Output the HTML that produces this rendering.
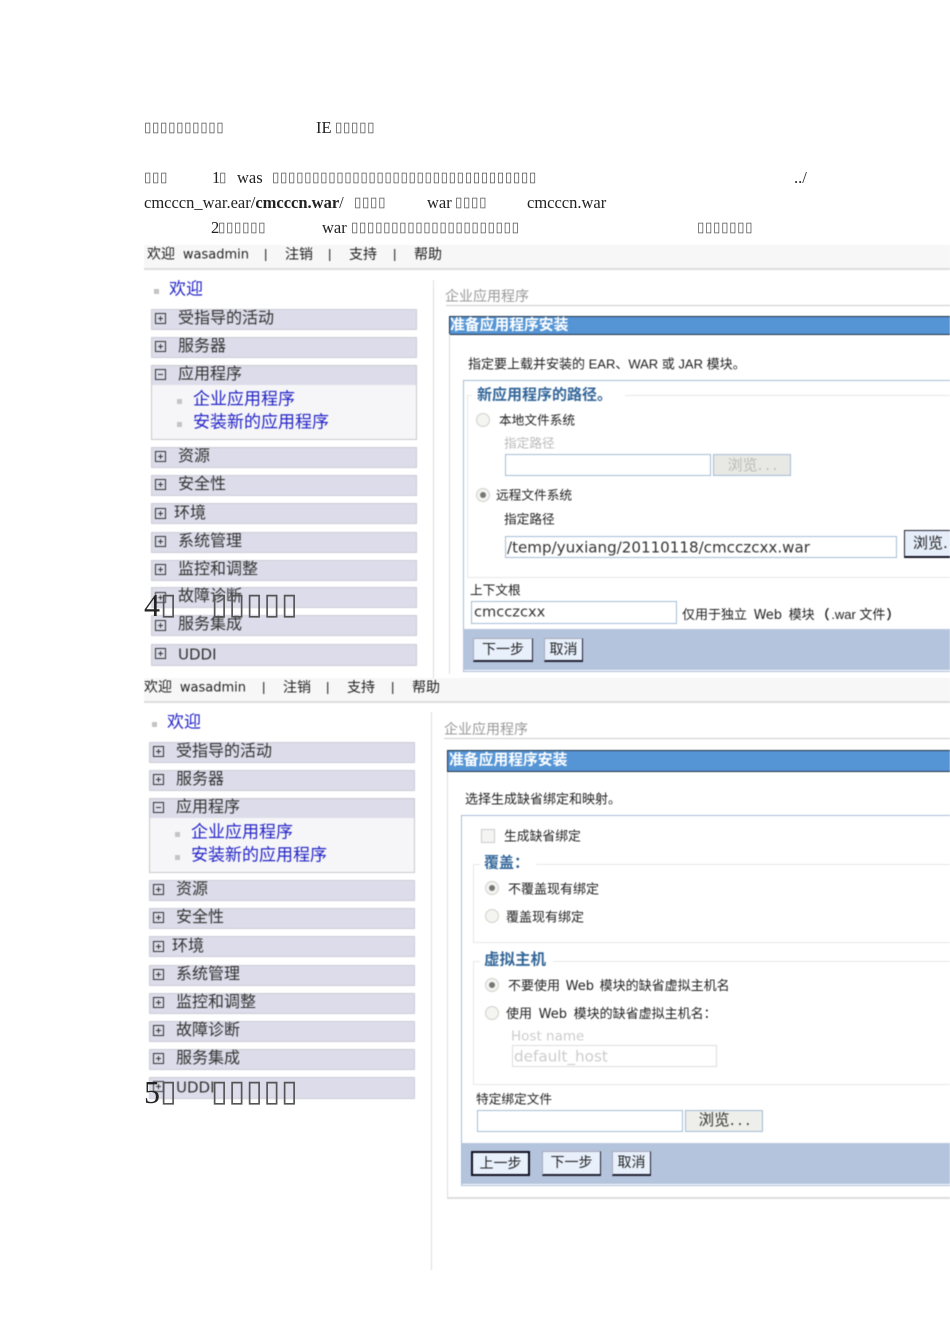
<!DOCTYPE html>
<html><head><meta charset="utf-8"><style>
html,body{margin:0;padding:0;background:#fff}
body{width:950px;height:1344px;position:relative;overflow:hidden;font-family:"Liberation Sans","WenQuanYi Zen Hei","Noto Sans CJK SC",sans-serif}
.a,.t,.b{position:absolute;white-space:nowrap}
.t{line-height:1;transform:translateY(calc(-50% + 1px));color:#222}
.s{font-family:"Liberation Serif","Noto Serif CJK SC",serif;font-size:16.5px;color:#222}
.b{font-family:"DejaVu Sans",sans-serif;line-height:1;transform:translateY(-50%);color:#555;font-size:13.5px;letter-spacing:.6px}
.big{font-size:30px;letter-spacing:1px}
.shot{position:absolute;left:0;top:0;width:950px;height:1344px;filter:blur(.45px);overflow:hidden}
.bar{position:absolute;left:146px;width:804px;height:23px;background:#f7f7f7;border-bottom:2px solid #ddd}
.row{position:absolute;left:151px;width:264px;height:19px;background:#dcdcea;border:1px solid #cdcdd8}
.exp{position:absolute;left:151px;top:365px;width:264px;height:73px;background:#f6f6f8;border:1px solid #c8c8d0}
.exp i{position:absolute;left:0;top:0;width:264px;height:19px;background:#dcdcea;display:block}
.pm{position:absolute;left:155px;width:9px;height:9px;border:1px solid #333;background:transparent}
.pm:before{content:"";position:absolute;left:2px;top:4px;width:5px;height:1px;background:#333}
.pm.p:after{content:"";position:absolute;left:4px;top:2px;width:1px;height:5px;background:#333}
.n{font-size:16px;color:#333}
.l{color:#2424c8}
.bl{position:absolute;width:5px;height:5px;background:#c4c4c4}
.r{position:absolute;width:12px;height:12px;border-radius:50%;border:1px solid #d0d0cc;background:#f4f4f0}
.r.on:after{content:"";position:absolute;left:3px;top:3px;width:6px;height:6px;border-radius:50%;background:#777}
.i{position:absolute;box-sizing:border-box;background:#fff;border:1px solid #a4bcd6}
.btn{position:absolute;box-sizing:border-box;background:#e8f0fc;border:1px solid #aab;border-right:1px solid #223;border-bottom:2px solid #223;text-align:center;font-size:14px;color:#222;line-height:21px;white-space:nowrap;overflow:hidden}
.w{font-family:"DejaVu Sans",sans-serif}
.h{background:#ddd;position:absolute}
.g{color:#999}
.m{font-size:13px;color:#222}
.le{font-size:15px;font-weight:bold;color:#336699}
.f{font-size:13px}
.ti{font-size:14.8px;font-weight:bold;color:#fff}
</style></head><body>

<div class="shot">
<!-- first nav -->
<div class="a" style="left:0;top:0;width:950px;height:680px">
<div class="bar" style="top:245px;left:144px;width:806px"></div>
<div class="t m" style="left:147px;top:253px;font-size:14px">欢迎 <span class="w" style="font-size:13px;margin-left:4px">wasadmin</span></div>
<div class="t m" style="left:264px;top:253px">|</div><div class="t m l" style="left:285px;top:253px;font-size:14px">注销</div>
<div class="t m" style="left:328px;top:253px">|</div><div class="t m l" style="left:349px;top:253px;font-size:14px">支持</div>
<div class="t m" style="left:393px;top:253px">|</div><div class="t m l" style="left:414px;top:253px;font-size:14px">帮助</div>

<div class="bl" style="left:154px;top:289px"></div><div class="t l" style="left:169px;top:288px;font-size:17px">欢迎</div>
<div class="row" style="top:309px"></div><div class="pm p" style="top:313px"></div><div class="t n" style="left:178px;top:318px">受指导的活动</div>
<div class="row" style="top:337px"></div><div class="pm p" style="top:341px"></div><div class="t n" style="left:178px;top:346px">服务器</div>
<div class="exp"><i></i></div><div class="pm" style="top:369px"></div><div class="t n" style="left:178px;top:374px">应用程序</div>
<div class="bl" style="left:177px;top:399px"></div><div class="t l" style="left:193px;top:398px;font-size:17px">企业应用程序</div>
<div class="bl" style="left:177px;top:422px"></div><div class="t l" style="left:193px;top:421px;font-size:17px">安装新的应用程序</div>
<div class="row" style="top:447px"></div><div class="pm p" style="top:451px"></div><div class="t n" style="left:178px;top:456px">资源</div>
<div class="row" style="top:475px"></div><div class="pm p" style="top:479px"></div><div class="t n" style="left:178px;top:484px">安全性</div>
<div class="row" style="top:503px"></div><div class="pm p" style="top:508px"></div><div class="t n" style="left:174px;top:513px">环境</div>
<div class="row" style="top:532px"></div><div class="pm p" style="top:536px"></div><div class="t n" style="left:178px;top:541px">系统管理</div>
<div class="row" style="top:560px"></div><div class="pm p" style="top:564px"></div><div class="t n" style="left:178px;top:569px">监控和调整</div>
<div class="row" style="top:587px"></div><div class="pm p" style="top:592px"></div><div class="t n" style="left:178px;top:596px">故障诊断</div>
<div class="row" style="top:615px"></div><div class="pm p" style="top:620px"></div><div class="t n" style="left:178px;top:624px">服务集成</div>
<div class="row" style="top:644px;height:20px"></div><div class="pm p" style="top:648px"></div><div class="t n w" style="left:178px;top:654px;font-size:15px">UDDI</div>
</div>

<div class="h" style="left:433px;top:280px;width:1px;height:398px"></div>
<div class="t g" style="left:445px;top:295px;font-size:14px">企业应用程序</div>
<div class="h" style="left:446px;top:305px;width:504px;height:1px;background:#ccc"></div>
<div class="a" style="left:449px;top:316px;width:501px;height:17px;background:#5595d5;border:1px solid #234;border-right:0"></div>
<div class="t ti" style="left:450px;top:325px">准备应用程序安装</div>
<div class="h" style="left:449px;top:334px;width:1px;height:340px"></div>
<div class="t m" style="left:468px;top:363px">指定要上载并安装的 EAR、WAR 或 JAR 模块。</div>
<div class="a" style="left:463px;top:380px;width:487px;height:290px;border-left:1px solid #a8bdd8;border-top:1px solid #a8bdd8;border-bottom:1px solid #a8bdd8"></div>
<div class="a" style="left:467px;top:395px;width:483px;height:181px;border-left:1px solid #e8e8e8;border-top:1px solid #e8e8e8;border-bottom:1px solid #e8e8e8"></div>
<div class="a" style="left:472px;top:386px;width:153px;height:18px;background:#fff"></div>
<div class="t le" style="left:477px;top:394px">新应用程序的路径。</div>
<div class="r" style="left:476px;top:413px"></div>
<div class="t f" style="left:499px;top:420px;font-size:12.7px">本地文件系统</div>
<div class="t f" style="left:504px;top:443px;font-size:12.7px;color:#bbb">指定路径</div>
<div class="i" style="left:505px;top:454px;width:206px;height:22px"></div>
<div class="btn" style="left:713px;top:454px;width:78px;height:22px;background:#e8e8e4;border:1px solid #a4bcd6;color:#bbb;font-size:15px;line-height:20px">浏览<span class="w" style="letter-spacing:-1px">. . .</span></div>
<div class="r on" style="left:476px;top:488px"></div>
<div class="t f" style="left:496px;top:495px;font-size:12.7px">远程文件系统</div>
<div class="t f" style="left:504px;top:519px;font-size:12.7px">指定路径</div>
<div class="i" style="left:505px;top:536px;width:392px;height:22px"></div>
<div class="t w" style="left:507px;top:547px;font-size:15.1px;color:#333">/temp/yuxiang/20110118/cmcczcxx.war</div>
<div class="btn" style="left:904px;top:530px;width:60px;height:28px;border:1px solid #223;border-bottom:2px solid #112;text-align:left;padding-left:8px;font-size:15px;line-height:24px;background:#e6eefa">浏览<span class="w">. . .</span></div>
<div class="t f" style="left:470px;top:590px;font-size:12.7px">上下文根</div>
<div class="i" style="left:471px;top:601px;width:206px;height:23px"></div>
<div class="t w" style="left:474px;top:612px;font-size:14.6px;color:#333">cmcczcxx</div>
<div class="t f" style="left:682px;top:614px;font-size:13px">仅用于独立 <span class="w" style="margin:0 3px">Web</span> 模块<span style="font-weight:bold;margin:0 -2px 0 2px">（</span> .war 文件<span style="font-weight:bold;margin-left:1px">）</span></div>
<div class="a" style="left:463px;top:629px;width:487px;height:41px;background:#b4c4dc"></div>
<div class="btn" style="left:473px;top:638px;width:60px;height:24px">下一步</div>
<div class="btn" style="left:544px;top:638px;width:39px;height:24px">取消</div>

<!-- second nav -->
<div class="a" style="left:-2px;top:433px;width:952px;height:680px">
<div class="bar" style="top:245px;left:146px;width:806px"></div>
<div class="t m" style="left:146px;top:253px;font-size:14px">欢迎 <span class="w" style="font-size:13px;margin-left:4px">wasadmin</span></div>
<div class="t m" style="left:264px;top:253px">|</div><div class="t m l" style="left:285px;top:253px;font-size:14px">注销</div>
<div class="t m" style="left:328px;top:253px">|</div><div class="t m l" style="left:349px;top:253px;font-size:14px">支持</div>
<div class="t m" style="left:393px;top:253px">|</div><div class="t m l" style="left:414px;top:253px;font-size:14px">帮助</div>

<div class="bl" style="left:154px;top:289px"></div><div class="t l" style="left:169px;top:288px;font-size:17px">欢迎</div>
<div class="row" style="top:309px"></div><div class="pm p" style="top:313px"></div><div class="t n" style="left:178px;top:318px">受指导的活动</div>
<div class="row" style="top:337px"></div><div class="pm p" style="top:341px"></div><div class="t n" style="left:178px;top:346px">服务器</div>
<div class="exp"><i></i></div><div class="pm" style="top:369px"></div><div class="t n" style="left:178px;top:374px">应用程序</div>
<div class="bl" style="left:177px;top:399px"></div><div class="t l" style="left:193px;top:398px;font-size:17px">企业应用程序</div>
<div class="bl" style="left:177px;top:422px"></div><div class="t l" style="left:193px;top:421px;font-size:17px">安装新的应用程序</div>
<div class="row" style="top:447px"></div><div class="pm p" style="top:451px"></div><div class="t n" style="left:178px;top:456px">资源</div>
<div class="row" style="top:475px"></div><div class="pm p" style="top:479px"></div><div class="t n" style="left:178px;top:484px">安全性</div>
<div class="row" style="top:503px"></div><div class="pm p" style="top:508px"></div><div class="t n" style="left:174px;top:513px">环境</div>
<div class="row" style="top:532px"></div><div class="pm p" style="top:536px"></div><div class="t n" style="left:178px;top:541px">系统管理</div>
<div class="row" style="top:560px"></div><div class="pm p" style="top:564px"></div><div class="t n" style="left:178px;top:569px">监控和调整</div>
<div class="row" style="top:588px"></div><div class="pm p" style="top:592px"></div><div class="t n" style="left:178px;top:597px">故障诊断</div>
<div class="row" style="top:616px"></div><div class="pm p" style="top:620px"></div><div class="t n" style="left:178px;top:625px">服务集成</div>
<div class="row" style="top:644px;height:20px"></div><div class="pm p" style="top:648px"></div><div class="t n w" style="left:178px;top:654px;font-size:15px">UDDI</div>
</div>

<div class="h" style="left:431px;top:712px;width:1px;height:558px"></div>
<div class="t g" style="left:444px;top:728px;font-size:14px">企业应用程序</div>
<div class="h" style="left:444px;top:738px;width:506px;height:1px;background:#ccc"></div>
<div class="a" style="left:447px;top:750px;width:503px;height:20px;background:#5595d5;border:1px solid #234;border-right:0"></div>
<div class="t ti" style="left:449px;top:760px">准备应用程序安装</div>
<div class="a" style="left:447px;top:772px;width:503px;height:425px;border-left:1px solid #ddd;border-bottom:2px solid #ddd"></div>
<div class="t m" style="left:465px;top:798px">选择生成缺省绑定和映射。</div>
<div class="a" style="left:461px;top:815px;width:489px;height:369px;border-left:1px solid #a8bdd8;border-top:1px solid #a8bdd8;border-bottom:1px solid #a8bdd8"></div>
<div class="a" style="left:481px;top:829px;width:12px;height:12px;border:1px solid #ccc;background:#f4f4f2"></div>
<div class="t f" style="left:504px;top:836px;font-size:12.8px">生成缺省绑定</div>
<div class="a" style="left:473px;top:864px;width:477px;height:77px;border-left:1px solid #e8e8e8;border-top:1px solid #e8e8e8;border-bottom:1px solid #e8e8e8"></div>
<div class="a" style="left:480px;top:855px;width:56px;height:18px;background:#fff"></div>
<div class="t le" style="left:484px;top:862px">覆盖：</div>
<div class="r on" style="left:485px;top:881px"></div>
<div class="t f" style="left:508px;top:888px">不覆盖现有绑定</div>
<div class="r" style="left:485px;top:909px"></div>
<div class="t f" style="left:506px;top:916px">覆盖现有绑定</div>
<div class="a" style="left:473px;top:961px;width:477px;height:122px;border-left:1px solid #e8e8e8;border-top:1px solid #e8e8e8;border-bottom:1px solid #e8e8e8"></div>
<div class="a" style="left:480px;top:952px;width:73px;height:18px;background:#fff"></div>
<div class="t le" style="left:484px;top:959px;font-size:15.5px">虚拟主机</div>
<div class="r on" style="left:485px;top:978px"></div>
<div class="t f" style="left:508px;top:985px">不要使用 <span class="w" style="margin:0 2px">Web</span> 模块的缺省虚拟主机名</div>
<div class="r" style="left:485px;top:1006px"></div>
<div class="t f" style="left:506px;top:1013px">使用 <span class="w" style="margin:0 3px">Web</span> 模块的缺省虚拟主机名：</div>
<div class="t w" style="left:511px;top:1036px;font-size:13.5px;color:#ccc">Host name</div>
<div class="i" style="left:512px;top:1045px;width:205px;height:22px;border-color:#ddd"></div>
<div class="t w" style="left:514px;top:1056px;font-size:15.2px;color:#ccc">default_host</div>
<div class="t f" style="left:476px;top:1099px;font-size:12.7px">特定绑定文件</div>
<div class="i" style="left:477px;top:1110px;width:206px;height:22px"></div>
<div class="btn" style="left:685px;top:1110px;width:78px;height:22px;background:#eeeeea;border:1px solid #a4bcd6;color:#333;font-size:15.5px;line-height:19px">浏览<span class="w" style="letter-spacing:-1px">. . .</span></div>
<div class="a" style="left:462px;top:1143px;width:488px;height:41px;background:#b4c4dc"></div>
<div class="btn" style="left:471px;top:1151px;width:59px;height:25px;border:2px solid #112;line-height:21px">上一步</div>
<div class="btn" style="left:542px;top:1151px;width:59px;height:25px">下一步</div>
<div class="btn" style="left:612px;top:1151px;width:39px;height:25px">取消</div>
</div>

<!-- document text layer -->
<div class="b" style="left:144px;top:128px">▯▯▯▯▯▯▯▯▯▯</div>
<div class="t s" style="left:316px;top:127px">IE</div>
<div class="b" style="left:335px;top:128px">▯▯▯▯▯</div>

<div class="b" style="left:144px;top:178px">▯▯▯</div>
<div class="t s" style="left:212px;top:177px">1</div>
<div class="b" style="left:219px;top:178px">▯</div>
<div class="t s" style="left:237px;top:177px">was</div>
<div class="b" style="left:272px;top:178px">▯▯▯▯▯▯▯▯▯▯▯▯▯▯▯▯▯▯▯▯▯▯▯▯▯▯▯▯▯▯▯▯▯</div>
<div class="t s" style="left:794px;top:177px">../</div>

<div class="t s" style="left:144px;top:202px">cmcccn_war.ear/<b>cmcccn.war</b>/</div>
<div class="b" style="left:354px;top:203px">▯▯▯▯</div>
<div class="t s" style="left:427px;top:202px">war</div>
<div class="b" style="left:455px;top:203px">▯▯▯▯</div>
<div class="t s" style="left:527px;top:202px">cmcccn.war</div>

<div class="t s" style="left:211px;top:227px">2</div>
<div class="b" style="left:218px;top:228px">▯▯▯▯▯▯</div>
<div class="t s" style="left:322px;top:227px">war</div>
<div class="b" style="left:351px;top:228px">▯▯▯▯▯▯▯▯▯▯▯▯▯▯▯▯▯▯▯▯▯</div>
<div class="b" style="left:697px;top:228px">▯▯▯▯▯▯▯</div>

<div class="t s" style="left:144px;top:604px;font-size:32px;color:#222">4</div>
<div class="b big" style="left:160px;top:605px">▯</div>
<div class="b big" style="left:211px;top:605px">▯▯▯▯▯</div>
<div class="t s" style="left:144px;top:1091px;font-size:32px;color:#222">5</div>
<div class="b big" style="left:160px;top:1092px">▯</div>
<div class="b big" style="left:211px;top:1092px">▯▯▯▯▯</div>
</body></html>
